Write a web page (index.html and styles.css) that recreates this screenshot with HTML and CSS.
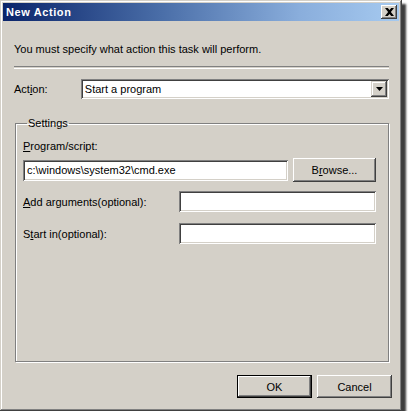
FILE: index.html
```html
<!DOCTYPE html>
<html>
<head>
<meta charset="utf-8">
<link rel="stylesheet" href="styles.css">
</head>
<body>
<div class="window">
  <div class="titlebar">
    <span class="title">New Action</span>
    <span class="close"><svg width="9" height="8" viewBox="0 0 9 8"><path d="M0 0h2.8L4.5 2.1 6.2 0H9L5.9 4 9 8H6.2L4.5 5.9 2.8 8H0l3.1-4z" fill="#000"/></svg></span>
  </div>
  <div class="content">
    <p class="intro">You must specify what action this task will perform.</p>
    <div class="sep"></div>
    <div class="action-row">
      <span class="lbl action-lbl">Act<u>i</u>on:</span>
      <div class="combo">
        <span class="combo-text">Start a program</span>
        <span class="combo-btn"><svg width="7" height="4" viewBox="0 0 7 4"><path d="M0 0h7L3.5 4z" fill="#000"/></svg></span>
      </div>
    </div>
    <fieldset class="group">
      <legend>Settings</legend>
      <div class="lbl prog-lbl"><u>P</u>rogram/script:</div>
      <div class="prog-row">
        <div class="field prog-field">c:\windows\system32\cmd.exe</div>
        <div class="btn browse">B<u>r</u>owse...</div>
      </div>
      <div class="arg-row">
        <span class="lbl"><u>A</u>dd arguments(optional):</span>
        <div class="field small"></div>
      </div>
      <div class="arg-row">
        <span class="lbl">S<u>t</u>art in(optional):</span>
        <div class="field small"></div>
      </div>
    </fieldset>
    <div class="footer">
      <div class="btn default">OK</div>
      <div class="btn">Cancel</div>
    </div>
  </div>
</div>
</body>
</html>
```
FILE: styles.css
```css
html, body {
  margin: 0;
  padding: 0;
  background: #ffffff;
}
body {
  font-family: Tahoma, "Liberation Sans", Arial, sans-serif;
  font-size: 11px;
  color: #000;
}
.window {
  width: 402px;
  height: 411px;
  box-sizing: border-box;
  background: #d4d0c8;
  padding: 3px;
  display: flex;
  flex-direction: column;
  box-shadow:
    inset -1px -1px #404040,
    inset 1px 1px #d4d0c8,
    inset -2px -2px #808080,
    inset 2px 2px #ffffff,
    4px 4px 2px rgba(40,40,40,0.9);
}
.titlebar {
  height: 18px;
  background: linear-gradient(to right, #0a246a 0%, #4a6ea8 40%, #8aaedc 75%, #a6caf0 100%);
  display: flex;
  align-items: center;
  justify-content: space-between;
  padding: 0 2px 0 3px;
}
.title {
  color: #fff;
  font-weight: bold;
  font-size: 11px;
  letter-spacing: 0.6px;
}
.close {
  width: 16px;
  height: 14px;
  box-sizing: border-box;
  background: #d4d0c8;
  display: flex;
  align-items: center;
  justify-content: center;
  box-shadow:
    inset -1px -1px #404040,
    inset 1px 1px #ffffff,
    inset -2px -2px #808080;
}
.content {
  flex: 1;
  display: flex;
  flex-direction: column;
  padding: 0 10px 0 11px;
}
.intro {
  margin: 22px 0 0 0;
  line-height: 13px;
}
.sep {
  margin-top: 10px;
  height: 1px;
  border-top: 1px solid #808080;
  border-bottom: 1px solid #ffffff;
}
.action-row {
  display: flex;
  align-items: center;
  margin-top: 10px;
}
.action-lbl {
  width: 67px;
}
.combo {
  width: 309px;
  height: 20px;
  box-sizing: border-box;
  background: #fff;
  display: flex;
  align-items: center;
  justify-content: space-between;
  padding: 2px;
  box-shadow:
    inset 1px 1px #808080,
    inset -1px -1px #ffffff,
    inset 2px 2px #404040,
    inset -2px -2px #d4d0c8;
}
.combo-text {
  padding-left: 2px;
}
.combo-btn {
  width: 16px;
  height: 16px;
  box-sizing: border-box;
  background: #d4d0c8;
  display: flex;
  align-items: center;
  justify-content: center;
  box-shadow:
    inset -1px -1px #404040,
    inset 1px 1px #d4d0c8,
    inset -2px -2px #808080,
    inset 2px 2px #ffffff;
}
.group {
  margin: 18px 0 0 1px;
  padding: 11px 12px 0 7px;
  width: 373px;
  height: 245px;
  box-sizing: border-box;
  border: 1px solid #808080;
  box-shadow: 1px 1px #ffffff, inset 1px 1px #ffffff;
}
.group legend {
  padding: 0 1px;
  margin-left: 4px;
}
.prog-lbl {
  line-height: 13px;
}
.prog-row {
  display: flex;
  align-items: center;
  margin-top: 5px;
  gap: 5px;
}
.field {
  height: 21px;
  box-sizing: border-box;
  background: #fff;
  display: flex;
  align-items: center;
  padding-left: 4px;
  box-shadow:
    inset 1px 1px #808080,
    inset -1px -1px #ffffff,
    inset 2px 2px #404040,
    inset -2px -2px #d4d0c8;
}
.prog-field {
  width: 265px;
}
.btn {
  width: 75px;
  height: 23px;
  box-sizing: border-box;
  background: #d4d0c8;
  display: flex;
  align-items: center;
  justify-content: center;
  box-shadow:
    inset -1px -1px #404040,
    inset 1px 1px #ffffff,
    inset -2px -2px #808080;
}
.browse {
  width: 83px;
  height: 24px;
}
.default {
  box-shadow:
    inset 0 0 0 1px #000,
    inset -2px -2px #404040,
    inset 2px 2px #ffffff,
    inset -3px -3px #808080;
}
.arg-row {
  display: flex;
  align-items: center;
  justify-content: space-between;
  margin-top: 9px;
}
.arg-row + .arg-row {
  margin-top: 11px;
}
.small {
  width: 197px;
}
.footer {
  display: flex;
  justify-content: flex-end;
  gap: 5px;
  margin-top: 13px;
  margin-right: -3px;
}
```
